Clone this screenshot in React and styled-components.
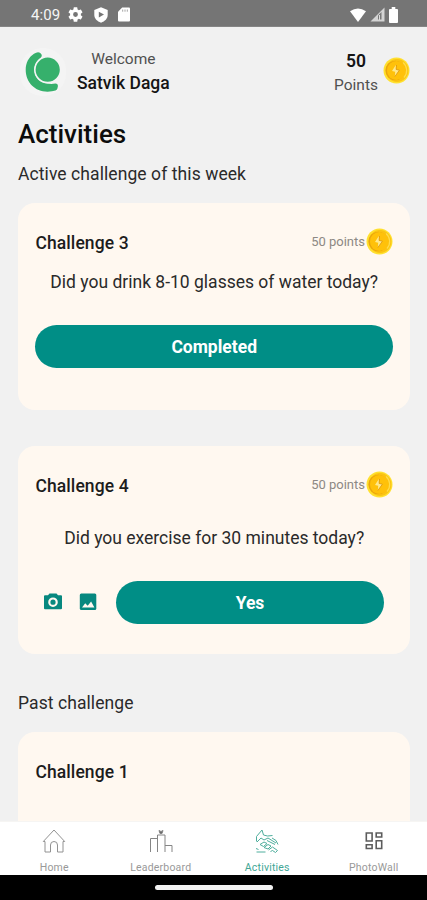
import React from "react";
import styled, { createGlobalStyle } from "styled-components";

const GlobalStyle = createGlobalStyle`
  * { box-sizing: border-box; }
  html, body { margin: 0; padding: 0; overflow: hidden; }
  body { font-family: Roboto, "Liberation Sans", sans-serif; background: #f1f1f1; }
  svg { display: block; flex: none; }
`;

const Screen = styled.div`
  width: 427px;
  height: 900px;
  display: flex;
  flex-direction: column;
  overflow: hidden;
  background: #f1f1f1;
`;

const Text = styled.span`
  display: block;
  white-space: nowrap;
  font-size: ${(p) => p.$size}px;
  line-height: ${(p) => p.$line || 20}px;
  font-weight: ${(p) => p.$weight || 400};
  letter-spacing: ${(p) => p.$spacing || 0}px;
  color: ${(p) => p.$color || "#2a2a2a"};
`;

const StatusBar = styled.div`
  height: 27px;
  flex: none;
  display: flex;
  justify-content: space-between;
  padding: 3px 29px 0 31px;
  background: #757575;
  border-bottom: 1px solid #858585;
`;

const StatusGroup = styled.div`
  display: flex;
  align-items: center;
  height: 23px;
  gap: ${(p) => p.$gap}px;
`;

const StatusIcons = styled.div`
  display: flex;
  align-items: center;
  gap: 10.5px;
  margin-left: -1px;
`;

const Header = styled.header`
  height: 90px;
  flex: none;
  display: flex;
  align-items: flex-start;
  justify-content: space-between;
  padding: 21px 17px 0 20px;
`;

const Profile = styled.div`
  display: flex;
  gap: 11px;
`;

const Avatar = styled.div`
  width: 46px;
  height: 48px;
  border-radius: 22px;
  display: flex;
  align-items: center;
  justify-content: center;
  background: #f4f4f4;
`;

const Stack = styled.div`
  display: flex;
  flex-direction: column;
  align-items: center;
  padding-top: ${(p) => p.$top || 0}px;
  gap: 4px;
`;

const Points = styled.div`
  display: flex;
  gap: 5px;
`;

const CoinSlot = styled.div`
  padding-top: 9px;
`;

const Content = styled.main`
  flex: 1;
  min-height: 0;
  overflow: hidden;
  display: flex;
  flex-direction: column;
  padding: 0 17px 0 18px;
`;

const PageTitle = styled(Text).attrs({ as: "h1" })`
  margin: 2px 0 0;
`;

const SectionTitle = styled(Text).attrs({ as: "h2" })`
  margin: ${(p) => p.$margin};
`;

const Card = styled.section`
  height: 207.8px;
  flex: none;
  display: flex;
  flex-direction: column;
  padding: 25.5px 17px 0 17.4px;
  margin-bottom: ${(p) => p.$after || 0}px;
  border-radius: 17px;
  background: #fff8f0;
`;

const CardHead = styled.div`
  height: 27px;
  display: flex;
  align-items: center;
  justify-content: space-between;
`;

const Reward = styled.div`
  display: flex;
  align-items: center;
  gap: 1px;
`;

const Question = styled.div`
  display: flex;
  justify-content: center;
  margin-top: ${(p) => p.$top}px;
`;

const ActionRow = styled.div`
  display: flex;
  align-items: center;
  margin-top: ${(p) => p.$top}px;
  padding: 0 ${(p) => p.$right || 0}px 0 ${(p) => p.$left || 0}px;
`;

const Attachments = styled.div`
  display: flex;
  gap: 16px;
  margin-right: 18.6px;
`;

const PillButton = styled.button`
  flex: 1;
  height: 43px;
  border: 0;
  border-radius: 22px;
  padding: 2px 0 0;
  display: flex;
  align-items: center;
  justify-content: center;
  font-family: inherit;
  background: #008e86;
`;

const TabBar = styled.nav`
  height: 54px;
  flex: none;
  display: grid;
  grid-template-columns: repeat(4, 1fr);
  padding-left: 1px;
  background: #fff;
  border-top: 1px solid #f6f5f3;
`;

const Tab = styled.div`
  display: flex;
  flex-direction: column;
  align-items: center;
  padding-top: 6px;
  overflow: hidden;
`;

const TabLabel = styled(Text)`
  margin-top: 8px;
`;

const SystemBar = styled.div`
  height: 25px;
  flex: none;
  display: flex;
  justify-content: center;
  padding-top: 10px;
  background: #000;
`;

const Handle = styled.div`
  width: 118px;
  height: 5px;
  border-radius: 3px;
  background: #f2f2f2;
`;

const Coin = () => (
  <svg width="27" height="27" viewBox="0 0 27 27">
    <circle cx="13.5" cy="13.5" r="13" fill="#ffe02f" />
    <circle cx="14" cy="13.5" r="11.4" fill="#fbc313" />
    <circle cx="12.3" cy="13.5" r="9.8" fill="#e9a60e" />
    <circle cx="13.4" cy="13.5" r="9.4" fill="#ffc10a" />
    <path d="M20 5.5a10.5 10.5 0 0 1 1 15" fill="none" stroke="#ffdc4b" strokeWidth="1.2" />
    <path d="M12.8 8 9 14l3.200.8-.4 4.800 4.600-6.400-3.300-.8z" fill="#ffe98c" />
    <path d="m13.500 8-.4 4.400 3.300.8-4.600 6.400" fill="none" stroke="#dc9410" strokeWidth=".8" />
  </svg>
);

const Logo = () => (
  <svg width="36" height="42" viewBox="0 0 36 42">
    <path d="M15 1.800Q12.500.4 9 2.800C3.500 6.500.7 12 .7 18.800.7 31.500 10 40.700 22.500 40.700q5 0 8-1.100 1.500-.6 1.900-2l.5-2.300Q33 32.500 30.500 32.500c-3 .6-5 .6-8 .1C15 31.500 9.500 26.500 9.500 18.800c0-5 2.500-9 6.500-12.200Q18 4 15 1.800z" fill="#36b06c" />
    <circle cx="22.700" cy="18.700" r="12.900" fill="#36b06c" stroke="#f4f4f4" strokeWidth="1.600" />
  </svg>
);

const GearIcon = () => (
  <svg width="15" height="15" viewBox="2 2 20 20">
    <path fill="#fff" fillRule="evenodd" d="M19.140 12.940c.04-.3.06-.61.06-.94s-.02-.64-.07-.94l2.030-1.580a.49.49 0 0 0 .12-.61l-1.920-3.320a.49.49 0 0 0-.59-.22l-2.390.96a7 7 0 0 0-1.620-.94l-.36-2.540A.48.48 0 0 0 13.920 2.400h-3.840a.48.48 0 0 0-.47.41l-.36 2.540c-.59.24-1.130.57-1.620.94l-2.390-.96a.48.48 0 0 0-.59.22L2.740 8.870a.48.48 0 0 0 .12.610l2.030 1.580c-.05.3-.09.63-.09.94s.02.64.07.94l-2.030 1.580a.49.49 0 0 0-.12.610l1.920 3.320c.12.22.37.29.59.22l2.390-.96c.5.38 1.030.7 1.620.94l.36 2.540c.05.24.24.41.48.41h3.840c.24 0 .44-.17.47-.41l.36-2.540a7 7 0 0 0 1.620-.94l2.390.96c.22.08.47 0 .59-.22l1.920-3.320a.48.48 0 0 0-.12-.61zM12 15.200a3.200 3.200 0 1 1 0-6.400 3.200 3.200 0 0 1 0 6.400z" />
  </svg>
);

const ShieldIcon = () => (
  <svg width="14" height="16" viewBox="0 0 14 16">
    <path d="M7 .3 13.700 3v4.800c0 3.800-2.800 6.600-6.700 7.900C3.100 14.400.3 11.600.3 7.800V3z" fill="#fff" />
    <path d="M4.800 4.700 10 7.600l-5.200 3z" fill="#757575" />
  </svg>
);

const SdCardIcon = () => (
  <svg width="12" height="15" viewBox="0 0 12 15">
    <path d="M4.200.5H11q1 0 1 1v12q0 1-1 1H1q-1 0-1-1V4.800z" fill="#fff" />
    <path d="M4.700 2.500v2.200M7 2.500v2.200M9.300 2.500v2.200" stroke="#a5a5a5" />
  </svg>
);

const WifiIcon = () => (
  <svg width="16" height="14" viewBox="0 0 16 14">
    <path d="M0 3.200Q8-2 16 3.200L8 14z" fill="#fff" />
  </svg>
);

const SignalIcon = () => (
  <svg width="15" height="15" viewBox="0 0 15 15">
    <path d="M14.500.5v14H.5z" fill="#d4d4d4" />
    <path d="M11.500 5v7.500H8V8.500z" fill="#777" />
    <path d="M9.500 8v5" stroke="#ddd" />
  </svg>
);

const BatteryIcon = () => (
  <svg width="9" height="16" viewBox="0 0 10 16" preserveAspectRatio="none">
    <path d="M3 0h4v2h2q1 0 1 1v12q0 1-1 1H1q-1 0-1-1V3q0-1 1-1h2z" fill="#fff" />
  </svg>
);

const CameraIcon = () => (
  <svg width="20" height="18" viewBox="0 0 20 18">
    <path d="M6.500.5h7l1.500 1.800h3q1 0 1 1v12q0 1-1 1H2q-1 0-1-1v-12q0-1 1-1h3z" fill="#07887f" />
    <circle cx="10" cy="9.200" r="3.700" fill="none" stroke="#fff8f0" strokeWidth="2.200" />
  </svg>
);

const ImageIcon = () => (
  <svg width="18" height="18" viewBox="0 0 18 18">
    <rect x=".8" y=".5" width="16.500" height="16.500" rx="1.500" fill="#07887f" />
    <path d="m3 14.500 3.200-4.300 2.500 2.600 3.400-4.200 3.300 5.900z" fill="#fff8f0" />
  </svg>
);

const HomeIcon = () => (
  <svg width="26" height="26" viewBox="0 0 26 26" fill="none" stroke="#929292" strokeWidth="1">
    <path d="M4 13.500H2.300L13 2l10.700 11.500H22V24h-5.500v-7a3.500 3.500 0 0 0-7 0v7H4z" />
  </svg>
);

const PodiumIcon = () => (
  <svg width="26" height="26" viewBox="0 0 26 26" fill="none" stroke="#858585" strokeWidth="1">
    <path d="M2.500 24V10.500h7M9.500 24V7h7.500v17M17 17.500h7V24" />
    <path d="m11 2.500 2 1 2-1-1 3h-2z" fill="#666" />
  </svg>
);

const HandsIcon = () => (
  <svg width="26" height="26" viewBox="0 0 26 26" fill="none" stroke="#4fae9d" strokeWidth="1">
    <path d="M2.500 13.500V8.500L8 2l1.500 5 4 1 5-.5M18 10l4 2.500 2 4M3 14l4-4 3 2 4-2 8 5M6 16.500l4-2.500 3 1.500-3.500 3zM10 19.500l4-3 3 1.500-3 3zM14.500 22l4-3 5 3.500-2 2-3-2-2 1M13 12.500l8 4M2 20.500l2.500 1M2.500 24h9" />
  </svg>
);

const GridIcon = () => (
  <svg width="26" height="26" viewBox="0 0 26 26" fill="none" stroke="#5c5c5c" strokeWidth="1.600">
    <path d="M5.300 5h5.800v8H5.300zM15.200 5h5.500v4h-5.500zM5.300 16.700h5.800v3.800H5.300zM15.200 12.700h5.500v7.800h-5.500z" />
  </svg>
);

const tabs = [
  { label: "Home", Icon: HomeIcon, color: "#999" },
  { label: "Leaderboard", Icon: PodiumIcon, color: "#999" },
  { label: "Activities", Icon: HandsIcon, color: "#41a695" },
  { label: "PhotoWall", Icon: GridIcon, color: "#999" },
];

const CardTitle = styled(Text)`
  padding-top: 3px;
`;

const ChallengeTitle = ({ children }) => (
  <CardTitle $size={17.5} $line={21} $weight={500} $spacing={0.1} $color="#1c1c1c">{children}</CardTitle>
);

const ChallengeHead = ({ title }) => (
  <CardHead>
    <ChallengeTitle>{title}</ChallengeTitle>
    <Reward>
      <Text $size={13} $color="#8d8984">50 points</Text>
      <Coin />
    </Reward>
  </CardHead>
);

export default function App() {
  return (
    <>
      <GlobalStyle />
      <Screen>
        <StatusBar>
          <StatusGroup $gap={9}>
            <Text $size={15} $spacing={0.1} $color="#f5f5f5">4:09</Text>
            <StatusIcons>
              <GearIcon />
              <ShieldIcon />
              <SdCardIcon />
            </StatusIcons>
          </StatusGroup>
          <StatusGroup $gap={4}>
            <WifiIcon />
            <SignalIcon />
            <BatteryIcon />
          </StatusGroup>
        </StatusBar>
        <Header>
          <Profile>
            <Avatar><Logo /></Avatar>
            <Stack $top={1}>
              <Text $size={15.5} $color="#505050">Welcome</Text>
              <Text $size={17.5} $weight={500} $color="#151515">Satvik Daga</Text>
            </Stack>
          </Profile>
          <Points>
            <Stack $top={3}>
              <Text $size={17.5} $weight={600} $color="#151515">50</Text>
              <Text $size={15.5} $color="#505050">Points</Text>
            </Stack>
            <CoinSlot><Coin /></CoinSlot>
          </Points>
        </Header>
        <Content>
          <PageTitle $size={26} $line={30} $weight={500} $color="#0c0c0c">Activities</PageTitle>
          <SectionTitle $size={17.5} $spacing={0.08} $margin="15px 0 18.6px">Active challenge of this week</SectionTitle>
          <Card $after={35.4}>
            <ChallengeHead title="Challenge 3" />
            <Question $top={17}>
              <Text $size={17.5}>Did you drink 8-10 glasses of water today?</Text>
            </Question>
            <ActionRow $top={32.5}>
              <PillButton><Text $size={17.5} $weight={700} $color="#fff">Completed</Text></PillButton>
            </ActionRow>
          </Card>
          <Card $after={39}>
            <ChallengeHead title="Challenge 4" />
            <Question $top={30}>
              <Text $size={17.5}>Did you exercise for 30 minutes today?</Text>
            </Question>
            <ActionRow $top={32.5} $left={8} $right={9}>
              <Attachments>
                <CameraIcon />
                <ImageIcon />
              </Attachments>
              <PillButton><Text $size={17.5} $weight={700} $color="#fff">Yes</Text></PillButton>
            </ActionRow>
          </Card>
          <SectionTitle $size={17.5} $spacing={0.08} $margin="0 0 19px">Past challenge</SectionTitle>
          <Card>
            <CardHead><ChallengeTitle>Challenge 1</ChallengeTitle></CardHead>
          </Card>
        </Content>
        <TabBar>
          {tabs.map(({ label, Icon, color }) => (
            <Tab key={label}>
              <Icon />
              <TabLabel $size={10.5} $line={12} $spacing={0.2} $color={color}>{label}</TabLabel>
            </Tab>
          ))}
        </TabBar>
        <SystemBar><Handle /></SystemBar>
      </Screen>
    </>
  );
}
